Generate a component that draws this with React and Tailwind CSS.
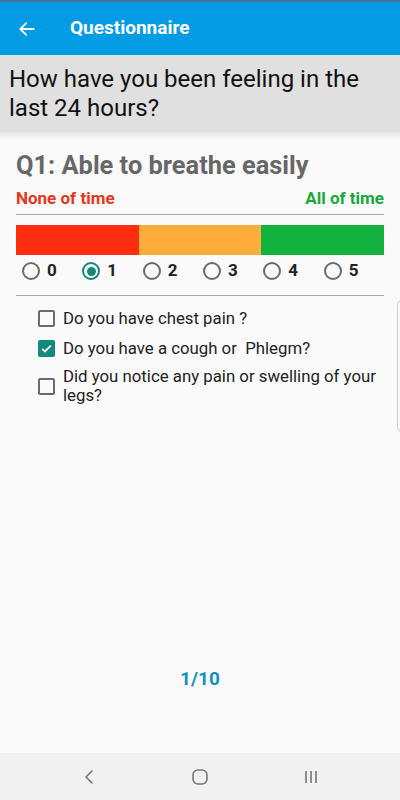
import React from 'react';

const Radio = ({ label, checked }) => (
  <div className="flex items-center gap-[7px] w-[62px]">
    <div
      className={`w-[18px] h-[18px] rounded-full border-2 flex items-center justify-center ${
        checked ? 'border-[#12897b]' : 'border-[#6b6b6b]'
      }`}
    >
      {checked && <div className="w-[9px] h-[9px] rounded-full bg-[#12897b]" />}
    </div>
    <span className="text-[17px] font-bold text-[#222]">{label}</span>
  </div>
);

const Check = ({ checked, children }) => (
  <div className="flex items-center gap-[8px]">
    {checked ? (
      <div className="w-[17px] h-[17px] shrink-0 rounded-[2px] bg-[#12897b] flex items-center justify-center">
        <svg className="w-[13px] h-[13px]" viewBox="0 0 24 24" fill="none" stroke="white" strokeWidth="3.2">
          <path d="M4 12.5l5 5L20 6.5" />
        </svg>
      </div>
    ) : (
      <div className="w-[17px] h-[17px] shrink-0 rounded-[2px] border-2 border-[#6b6b6b]" />
    )}
    <span className="text-[16.8px] leading-[19px] text-[#222]">{children}</span>
  </div>
);

export default function App() {
  return (
    <div
      className="w-[400px] h-[800px] flex flex-col bg-[#fafafa] relative overflow-hidden"
      style={{ fontFamily: 'Roboto, "Noto Sans", sans-serif' }}
    >
      {/* status strip */}
      <div className="h-[2px] bg-[#3f7494]" />
      {/* app bar */}
      <div className="h-[53px] bg-[#049be5] flex items-center">
        <svg className="w-[20px] h-[20px] ml-[17px]" viewBox="0 0 24 24" fill="none" stroke="white" strokeWidth="2.2" strokeLinecap="round" strokeLinejoin="round">
          <path d="M20 12H4M11 5l-7 7 7 7" />
        </svg>
        <span className="ml-[33px] text-white font-bold text-[19px]">Questionnaire</span>
      </div>
      {/* question header */}
      <div className="bg-[#e0e0e0] h-[77px] px-[9px] pt-[10px]">
        <p className="text-[24px] leading-[29px] text-[#111]">How have you been feeling in the last 24 hours?</p>
      </div>
      <div className="h-[8px] bg-gradient-to-b from-[#e6e6e6] to-[#fafafa]" />

      <div className="px-[16px] pt-[10px]">
        <h1 className="text-[25.4px] leading-[30px] font-bold text-[#676767]">Q1: Able to breathe easily</h1>
        <div className="flex justify-between mt-[8px] text-[17px] font-bold leading-[20px]">
          <span className="text-[#e53718]">None of time</span>
          <span className="text-[#17a83d]">All of time</span>
        </div>
        <div className="h-px bg-[#a8a8a8] mt-[6px]" />
        <div className="flex h-[30px] mt-[10px]">
          <div className="flex-1 bg-[#fd2e10]" />
          <div className="flex-1 bg-[#fdad3b]" />
          <div className="flex-1 bg-[#12b03c]" />
        </div>
        <div className="flex pl-[6px] mt-[5px] h-[22px] items-center">
          <Radio label="0" />
          <Radio label="1" checked />
          <Radio label="2" />
          <Radio label="3" />
          <Radio label="4" />
          <Radio label="5" />
        </div>
        <div className="h-px bg-[#a8a8a8] mt-[13px]" />
        <div className="pl-[22px] pt-[13px] flex flex-col gap-[11px]">
          <Check>Do you have chest pain ?</Check>
          <Check checked>Do you have a cough or&nbsp; Phlegm?</Check>
          <div className="-mt-[2px]">
            <Check>Did you notice any pain or swelling of your legs?</Check>
          </div>
        </div>
      </div>

      <div className="flex-1 flex items-end justify-center pb-[60px]">
        <span className="text-[19px] font-bold text-[#138fc0]">1/10</span>
      </div>

      {/* scroll hint at right edge */}
      <div className="absolute right-[-6px] top-[300px] w-[9px] h-[132px] rounded-[6px] border border-[#d0d0d0]" />

      {/* nav bar */}
      <div className="h-[47px] bg-[#f1f1f1] flex items-center justify-center">
        <div className="w-[111px] flex justify-center">
          <svg className="w-[14px] h-[18px]" viewBox="0 0 14 18" fill="none" stroke="#757575" strokeWidth="1.6" strokeLinecap="round" strokeLinejoin="round">
            <path d="M10 3L4 9l6 6" />
          </svg>
        </div>
        <div className="w-[111px] flex justify-center">
          <svg className="w-[18px] h-[18px]" viewBox="0 0 18 18" fill="none" stroke="#757575" strokeWidth="1.6">
            <rect x="2" y="2" width="14" height="14" rx="5" />
          </svg>
        </div>
        <div className="w-[111px] flex justify-center">
          <svg className="w-[18px] h-[18px]" viewBox="0 0 18 18" fill="none" stroke="#757575" strokeWidth="1.6">
            <path d="M4 3v12M9 3v12M14 3v12" />
          </svg>
        </div>
      </div>
    </div>
  );
}
